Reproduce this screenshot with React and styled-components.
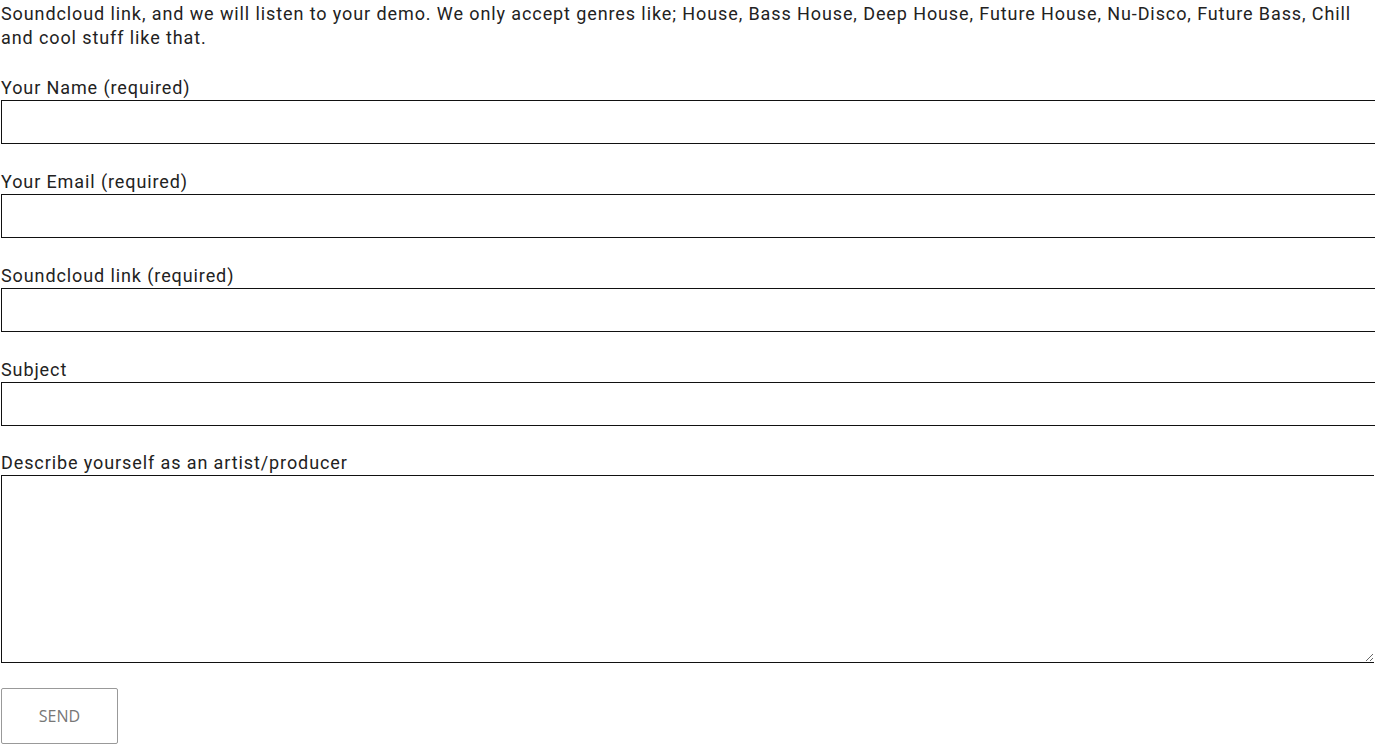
import React from 'react';
import styled, { createGlobalStyle } from 'styled-components';

const GlobalStyle = createGlobalStyle`
  html, body {
    margin: 0;
    padding: 0;
    background: #fff;
    overflow: hidden;
  }
  body {
    font-family: Roboto, "Liberation Sans", sans-serif;
    color: #222;
  }
`;

const Page = styled.div`
  padding: 2px 0 0 1px;
`;

const Intro = styled.p`
  margin: 0 0 26px;
  font-size: 18px;
  line-height: 24px;
  letter-spacing: 0.9px;
  white-space: nowrap;
`;

const Form = styled.form`
  display: flex;
  flex-direction: column;
`;

const Field = styled.div`
  display: flex;
  flex-direction: column;
  margin-top: ${(props) => (props.$lift ? '-1px' : '0')};
  margin-bottom: 26px;
`;

const Label = styled.label`
  font-size: 18px;
  line-height: 24px;
  letter-spacing: 0.9px;
`;

const Input = styled.input`
  box-sizing: border-box;
  width: calc(100% + 40px);
  height: 44px;
  margin: 0;
  border: 1px solid #111;
  border-radius: 0;
  background: #fff;
  font: inherit;
  outline: none;
`;

const TextArea = styled.textarea`
  box-sizing: border-box;
  width: calc(100% - 1px);
  height: 188px;
  margin: 0;
  border: 1px solid #111;
  border-right: none;
  border-radius: 0;
  background: #fff;
  font: inherit;
  outline: none;
  display: block;
`;

const SendButton = styled.button`
  box-sizing: border-box;
  width: 117px;
  height: 56px;
  margin: -1px 0 0;
  background: #fff;
  border: 1px solid #999;
  border-radius: 2px;
  color: #777;
  font-family: "Open Sans", "Liberation Sans", sans-serif;
  font-size: 16px;
  text-transform: uppercase;
  cursor: pointer;
`;

const fields = [
  { id: 'name', label: 'Your Name (required)' },
  { id: 'email', label: 'Your Email (required)' },
  { id: 'soundcloud', label: 'Soundcloud link (required)' },
  { id: 'subject', label: 'Subject' },
];

const App = () => (
  <Page>
    <GlobalStyle />
    <Intro>
      Soundcloud link, and we will listen to your demo. We only accept genres like; House, Bass
      House, Deep House, Future House, Nu-Disco, Future Bass, Chill
      <br />
      and cool stuff like that.
    </Intro>
    <Form onSubmit={(e) => e.preventDefault()}>
      {fields.map((f) => (
        <Field key={f.id}>
          <Label htmlFor={f.id}>{f.label}</Label>
          <Input id={f.id} type="text" />
        </Field>
      ))}
      <Field $lift>
        <Label htmlFor="describe">Describe yourself as an artist/producer</Label>
        <TextArea id="describe" />
      </Field>
      <div>
        <SendButton type="submit">Send</SendButton>
      </div>
    </Form>
  </Page>
);

export default App;
